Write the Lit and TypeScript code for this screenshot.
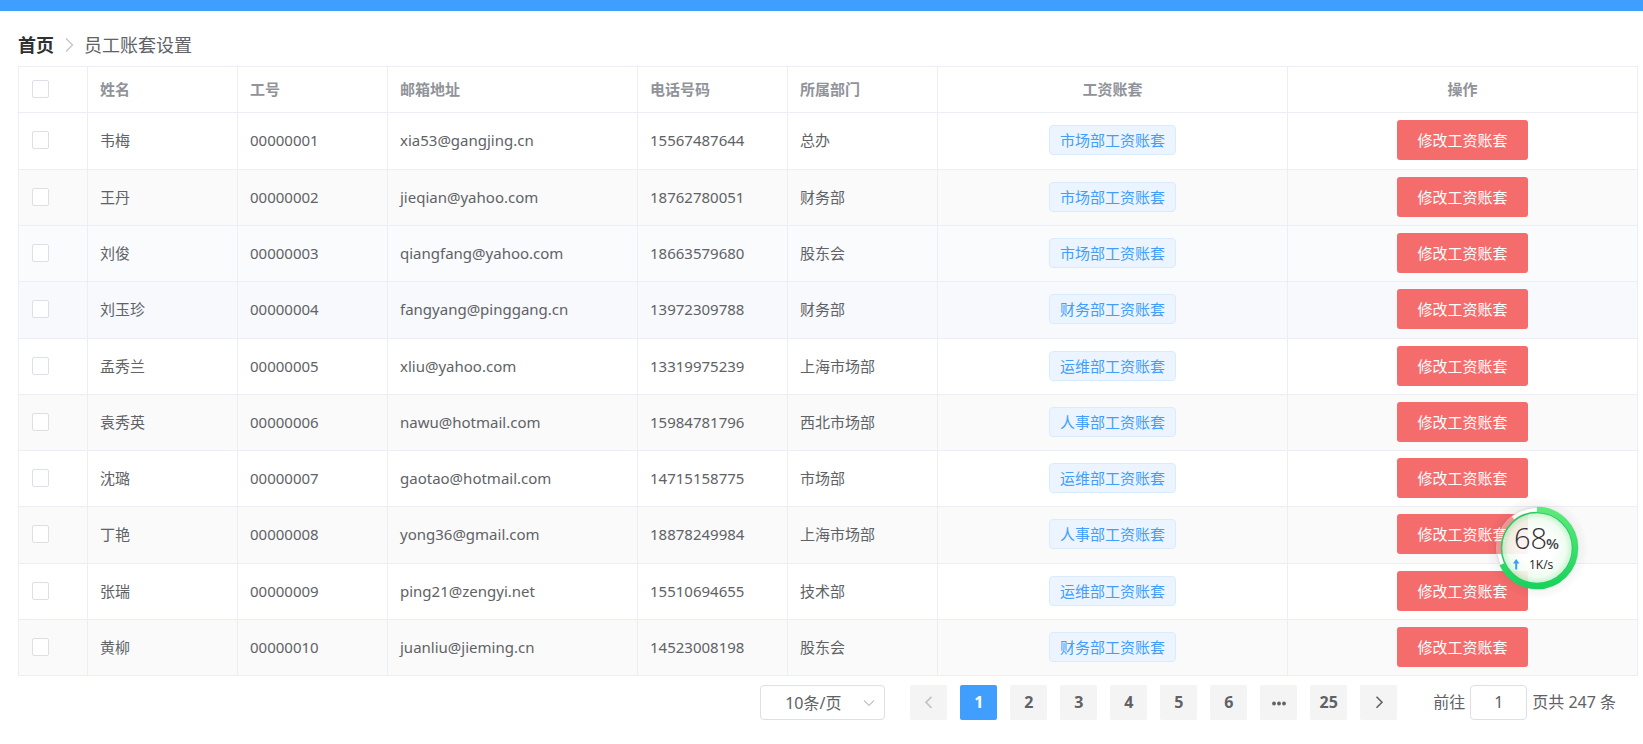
import { LitElement, html, css, svg } from "lit";
import { customElement, property, state } from "lit/decorators.js";
import { classMap } from "lit/directives/class-map.js";

interface Employee {
  name: string;
  workId: string;
  email: string;
  phone: string;
  department: string;
  salary: string;
}

const EMPLOYEES: Employee[] = [
  { name: "韦梅", workId: "00000001", email: "xia53@gangjing.cn", phone: "15567487644", department: "总办", salary: "市场部工资账套" },
  { name: "王丹", workId: "00000002", email: "jieqian@yahoo.com", phone: "18762780051", department: "财务部", salary: "市场部工资账套" },
  { name: "刘俊", workId: "00000003", email: "qiangfang@yahoo.com", phone: "18663579680", department: "股东会", salary: "市场部工资账套" },
  { name: "刘玉珍", workId: "00000004", email: "fangyang@pinggang.cn", phone: "13972309788", department: "财务部", salary: "财务部工资账套" },
  { name: "孟秀兰", workId: "00000005", email: "xliu@yahoo.com", phone: "13319975239", department: "上海市场部", salary: "运维部工资账套" },
  { name: "袁秀英", workId: "00000006", email: "nawu@hotmail.com", phone: "15984781796", department: "西北市场部", salary: "人事部工资账套" },
  { name: "沈璐", workId: "00000007", email: "gaotao@hotmail.com", phone: "14715158775", department: "市场部", salary: "运维部工资账套" },
  { name: "丁艳", workId: "00000008", email: "yong36@gmail.com", phone: "18878249984", department: "上海市场部", salary: "人事部工资账套" },
  { name: "张瑞", workId: "00000009", email: "ping21@zengyi.net", phone: "15510694655", department: "技术部", salary: "运维部工资账套" },
  { name: "黄柳", workId: "00000010", email: "juanliu@jieming.cn", phone: "14523008198", department: "股东会", salary: "财务部工资账套" },
];

@customElement("salary-table")
export class SalaryTable extends LitElement {
  @property({ attribute: false }) rows: Employee[] = [];

  static styles = css`
    :host { display: block; }
    .table {
      width: 100%;
      table-layout: fixed;
      border-collapse: separate;
      border-spacing: 0;
      border-top: 1px solid #ebeef5;
      border-left: 1px solid #ebeef5;
      font-size: 15px;
      line-height: 24px;
      color: #606266;
    }
    .select-col { width: 69px; }
    .normal-col { width: 150px; }
    .email-col { width: 250px; }
    .head, .cell {
      box-sizing: border-box;
      padding: 0 12px 2px;
      text-align: left;
      border-right: 1px solid #ebeef5;
      border-bottom: 1px solid #ebeef5;
      white-space: nowrap;
    }
    .head { height: 46px; color: #909399; font-weight: 700; }
    .cell { height: 56px; }
    .row:nth-child(7n + 1) .cell,
    .row:nth-child(7n + 4) .cell { height: 57px; }
    .center { text-align: center; }
    .striped .cell { background: #fafafa; }
    .leaving .cell { background: #f9fbfd; }
    .hovered .cell { background: #f7f9fc; }
    .check {
      appearance: none;
      display: block;
      box-sizing: border-box;
      width: 17px;
      height: 18px;
      margin: 0 1px;
      border: 1px solid #dcdfe6;
      border-radius: 2px;
      background: #fff;
    }
    .check:checked { background: #409eff; border-color: #409eff; }
    .tag {
      display: inline-block;
      box-sizing: border-box;
      height: 30px;
      padding: 0 10px;
      line-height: 28px;
      border: 1px solid #d9ecff;
      border-radius: 4px;
      background: #ecf5ff;
      color: #409eff;
      vertical-align: middle;
    }
    .edit {
      height: 40px;
      padding: 0 20px;
      border: 0;
      border-radius: 3px;
      background: #f56c6c;
      color: #fff;
      font: inherit;
      vertical-align: middle;
      cursor: pointer;
    }
  `;

  render() {
    return html`
      <table class="table">
        <colgroup>
          <col class="select-col" />
          <col class="normal-col" />
          <col class="normal-col" />
          <col class="email-col" />
          <col class="normal-col" />
          <col class="normal-col" />
          <col />
          <col />
        </colgroup>
        <thead>
          <tr>
            <th class="head"><input class="check" type="checkbox" aria-label="全选" /></th>
            <th class="head">姓名</th>
            <th class="head">工号</th>
            <th class="head">邮箱地址</th>
            <th class="head">电话号码</th>
            <th class="head">所属部门</th>
            <th class="head center">工资账套</th>
            <th class="head center">操作</th>
          </tr>
        </thead>
        <tbody>
          ${this.rows.map(
            (r, i) => html`
              <tr class=${classMap({ row: true, striped: i % 2 === 1, leaving: i === 2, hovered: i === 3 })}>
                <td class="cell"><input class="check" type="checkbox" aria-label=${r.name} /></td>
                <td class="cell">${r.name}</td>
                <td class="cell">${r.workId}</td>
                <td class="cell">${r.email}</td>
                <td class="cell">${r.phone}</td>
                <td class="cell">${r.department}</td>
                <td class="cell center"><span class="tag">${r.salary}</span></td>
                <td class="cell center"><button class="edit" type="button">修改工资账套</button></td>
              </tr>
            `
          )}
        </tbody>
      </table>
    `;
  }
}

@customElement("page-nav")
export class PageNav extends LitElement {
  @state() private current = 1;

  static styles = css`
    :host {
      display: flex;
      justify-content: flex-end;
      align-items: center;
      padding: 9px 22px 0 0;
      font-size: 16px;
      line-height: 35px;
      color: #606266;
    }
    .size { position: relative; margin-right: 25px; }
    .size-select {
      appearance: none;
      display: block;
      box-sizing: border-box;
      width: 125px;
      height: 35px;
      padding: 0 24px;
      border: 1px solid #dcdfe6;
      border-radius: 4px;
      background: #fff;
      color: inherit;
      font: inherit;
    }
    .size-arrow {
      position: absolute;
      right: 9px;
      top: 11px;
      pointer-events: none;
    }
    .pages { display: flex; gap: 13px; }
    .page {
      display: flex;
      align-items: center;
      justify-content: center;
      width: 37px;
      height: 35px;
      padding: 0;
      border: 0;
      border-radius: 2px;
      background: #f4f4f5;
      color: #606266;
      font: inherit;
      font-weight: 700;
      cursor: pointer;
    }
    .page:disabled { color: #c0c4cc; }
    .active { background: #409eff; color: #fff; }
    .jump { display: flex; align-items: center; gap: 5px; margin-left: 36px; }
    .jump-label { display: flex; align-items: center; gap: 5px; }
    .jump-input {
      box-sizing: border-box;
      width: 57px;
      height: 35px;
      padding: 0 3px;
      border: 1px solid #dcdfe6;
      border-radius: 4px;
      text-align: center;
      color: inherit;
      font: inherit;
    }
  `;

  private pageButton(n: number) {
    const active = n === this.current;
    return html`<button type="button" class=${classMap({ page: true, active })} @click=${() => (this.current = n)}>${n}</button>`;
  }

  render() {
    return html`
      <div class="size">
        <select class="size-select" aria-label="每页条数">
          <option>10条/页</option>
          <option>20条/页</option>
          <option>50条/页</option>
        </select>
        <svg class="size-arrow" width="14" height="14" viewBox="0 0 14 14" fill="none" stroke="#c0c4cc" stroke-width="1.2">
          <path d="M2 4.5 7 9.500 12 4.500" />
        </svg>
      </div>
      <div class="pages">
        <button type="button" class="page" aria-label="上一页" ?disabled=${this.current === 1}>
          <svg width="16" height="16" viewBox="0 0 16 16" fill="none" stroke="currentColor" stroke-width="1.800">
            <path d="M10.500 1.800 5 7.300 10.500 12.800" />
          </svg>
        </button>
        ${[1, 2, 3, 4, 5, 6].map((n) => this.pageButton(n))}
        <button type="button" class="page" aria-label="向后 5 页">
          <svg width="16" height="16" viewBox="0 0 16 16" fill="currentColor">
            <circle cx="3" cy="8.500" r="1.900" /><circle cx="8" cy="8.500" r="1.900" /><circle cx="13" cy="8.500" r="1.900" />
          </svg>
        </button>
        ${this.pageButton(25)}
        <button type="button" class="page" aria-label="下一页">
          <svg width="16" height="16" viewBox="0 0 16 16" fill="none" stroke="currentColor" stroke-width="1.600">
            <path d="M5.500 1.800 11 7.300 5.500 12.800" />
          </svg>
        </button>
      </div>
      <div class="jump">
        <label class="jump-label">前往<input class="jump-input" type="text" .value=${String(this.current)} /></label>
        <span>页共 247 条</span>
      </div>
    `;
  }
}

@customElement("speed-ball")
export class SpeedBall extends LitElement {
  @property({ type: Number }) percent = 68;

  static styles = css`
    :host { display: block; width: 100px; height: 100px; }
    .ball { display: block; }
    .value { font: 29px "Open Sans", "Noto Sans", sans-serif; font-weight: 300; fill: #333; }
    .unit { font: 15px "Open Sans", "Noto Sans", sans-serif; font-weight: 600; fill: #444; }
    .speed { font: 12px "Open Sans", "Noto Sans", sans-serif; fill: #222; }
  `;

  render() {
    const length = 2 * Math.PI * 38.5;
    const arc = (length * this.percent) / 100;
    return html`
      <svg class="ball" width="100" height="100" viewBox="0 0 100 100">
        <defs>
          <radialGradient id="face">
            <stop offset="0.450" stop-color="#fff" stop-opacity="0.920" />
            <stop offset="0.800" stop-color="#effcf0" stop-opacity="0.900" />
            <stop offset="1" stop-color="#b9f2c4" stop-opacity="0.900" />
          </radialGradient>
          <linearGradient id="ring" x1="1" y1="0" x2="0" y2="0">
            <stop offset="0" stop-color="#5cea78" />
            <stop offset="1" stop-color="#16d45c" />
          </linearGradient>
          <radialGradient id="halo">
            <stop offset="0.780" stop-color="#000" stop-opacity="0.120" />
            <stop offset="0.860" stop-color="#000" stop-opacity="0.035" />
            <stop offset="1" stop-color="#000" stop-opacity="0.010" />
          </radialGradient>
        </defs>
        ${svg`
          <path fill="url(#halo)" fill-rule="evenodd" d="M50 0a50 50 0 1 1 0 100a50 50 0 1 1 0-100zM50 9a41 41 0 1 0 0 82a41 41 0 1 0 0-82z" />
          <circle cx="50" cy="50" r="38.500" fill="none" stroke="#fff" stroke-opacity="0.250" stroke-width="5" />
          <path d="M50 11.500A38.500 38.500 0 0 0 26 20M13 60A38.500 38.500 0 0 0 15.200 67" fill="none" stroke="#fff" stroke-opacity="0.900" stroke-width="4" />
          <circle cx="50" cy="50" r="40.500" fill="none" stroke="#bbb" stroke-opacity="0.500" />
          <circle cx="50" cy="50" r="36" fill="url(#face)" />
          <circle cx="50" cy="50" r="35.500" fill="none" stroke="#2bc964" stroke-width="1.500" />
          <circle cx="50" cy="50" r="38.500" fill="none" stroke="url(#ring)" stroke-width="5.500"
            stroke-dasharray="${arc} ${length}" transform="rotate(-90 50 50)" />
          <path d="M29.200 61 32.500 65.500H30.200V71.500H28.200V65.500H25.900z" fill="#3a9dfb" />
        `}
        <text class="value" x="27" y="51">${this.percent}</text>
        <text class="unit" x="59" y="51">%</text>
        <text class="speed" x="42" y="71">1K/s</text>
      </svg>
    `;
  }
}

@customElement("app-root")
export class AppRoot extends LitElement {
  static styles = css`
    :host {
      display: block;
      position: relative;
      min-height: 100vh;
      background: #fff;
      font-family: "Noto Sans", "Noto Sans CJK SC", sans-serif;
    }
    .topbar { height: 11px; background: #409eff; }
    .content { padding: 22px 5px 0 18px; }
    .crumbs {
      display: flex;
      align-items: center;
      gap: 10px;
      height: 24px;
      margin-bottom: 9px;
      font-size: 18px;
      line-height: 24px;
      color: #606266;
    }
    .home { color: #303133; font-weight: 700; text-decoration: none; }
    .floating { position: absolute; right: 56px; top: 498px; }
  `;

  render() {
    return html`
      <header class="topbar"></header>
      <main class="content">
        <nav class="crumbs" aria-label="面包屑">
          <a class="home" href="#">首页</a>
          <svg width="10" height="16" viewBox="0 0 10 16" fill="none" stroke="#c0c4cc" stroke-width="1.300">
            <path d="M2 1.500 8.500 8 2 14.500" />
          </svg>
          <span>员工账套设置</span>
        </nav>
        <salary-table .rows=${EMPLOYEES}></salary-table>
        <page-nav></page-nav>
      </main>
      <speed-ball class="floating"></speed-ball>
    `;
  }
}
